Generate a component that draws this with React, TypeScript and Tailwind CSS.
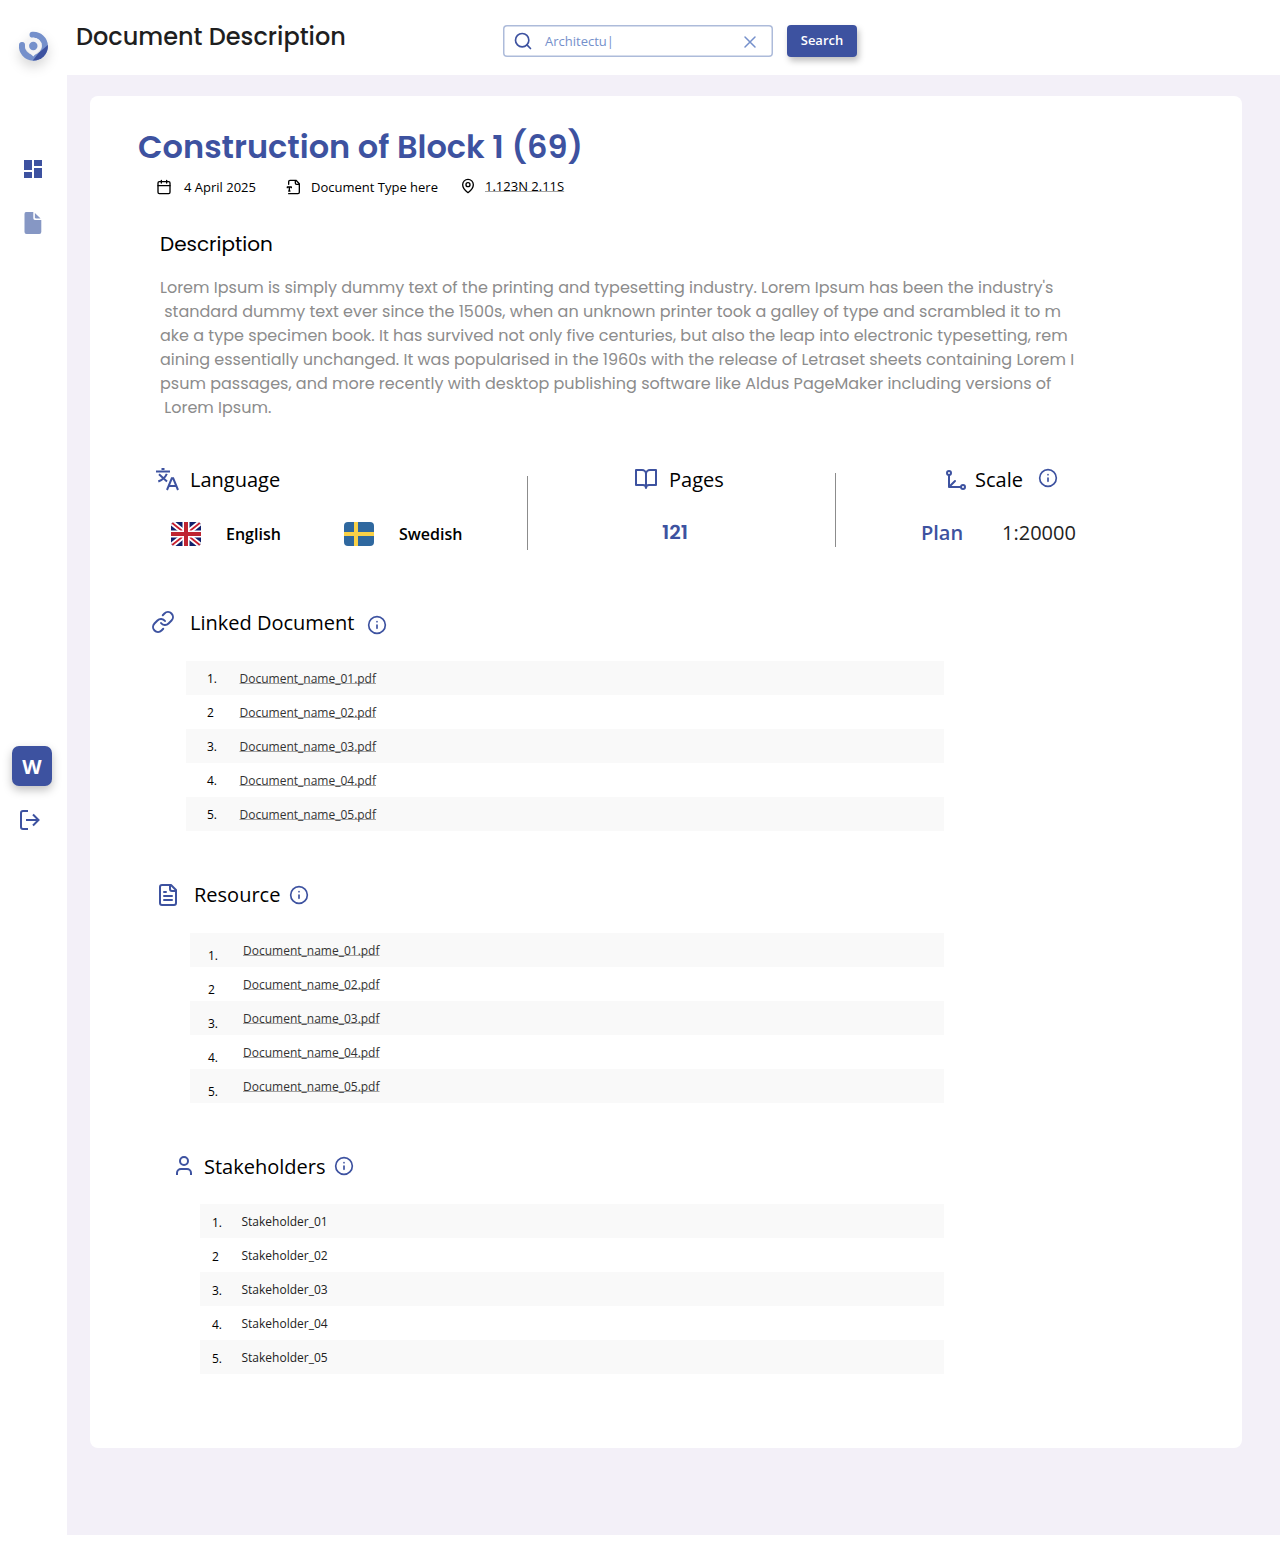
import React from "react";
import { MdDashboard } from "react-icons/md";

type IconProps = { className?: string; children: React.ReactNode; sw?: number };
function Icon({ className = "", children, sw = 2 }: IconProps) {
  return (
    <svg viewBox="0 0 24 24" fill="none" stroke="currentColor" strokeWidth={sw} strokeLinecap="round" strokeLinejoin="round" className={"block shrink-0 " + className}>
      {children}
    </svg>
  );
}

function InfoIcon({ className = "" }: { className?: string }) {
  return (
    <Icon className={"size-5 text-[#3d52a0] " + className}>
      <circle cx="12" cy="12" r="10" />
      <path d="M12 16v-4M12 8h.01" />
    </Icon>
  );
}

const title = "shrink-0 whitespace-pre text-xl leading-7 text-black";
const link = "underline decoration-[#a3a3a3] decoration-1 underline-offset-0 [text-decoration-skip-ink:none]";

function Logo() {
  return (
    <svg viewBox="0 0 30 30" className="ml-[18px] mt-[31px] block size-[30px] overflow-visible drop-shadow-[0_6px_6px_rgba(0,0,0,0.16)]">
      <path d="M4 14A11.5 11.5 0 1 0 14.5 3.7" fill="none" stroke="#7590cb" strokeWidth="6" strokeLinecap="round" />
      <path d="M29.900 14A14.500 14.500 0 0 1 14.800 29.600L20.800 21.700Z" fill="#3d52a0" />
      <path d="M15.300 6.600a8.400 8.400 0 0 1 8.300 8.400c0 4.300-4.600 6.300-8.300 10.400-3.700-4.100-8.300-6.100-8.300-10.400a8.400 8.400 0 0 1 8.300-8.400Z" fill="#f3f3f5" />
      <circle cx="15.300" cy="15" r="4.200" fill="#7590cb" />
    </svg>
  );
}

function Sidebar() {
  return (
    <aside className="flex w-[67px] shrink-0 flex-col">
      <Logo />
      <MdDashboard className="ml-[21px] mt-24 size-6 text-[#3d52a0]" />
      <svg viewBox="0 0 18 22" className="ml-6 mt-[31px] h-[22px] w-[18px]" fill="#8697c4">
        <path d="M2 0H9.300V6.200Q9.300 8 11 8H17.300V20Q17.300 22 15.300 22H2.500Q.5 22 .5 20V2Q.5 0 2 0Z" />
        <path d="M10.900.9 16.600 6.500H12.300Q10.900 6.500 10.900 5.200Z" />
      </svg>
      <div className="ml-3 mt-[512px] flex size-10 items-center justify-center rounded-[7px] bg-[#3d52a0] pt-0.5 text-xl font-bold text-white shadow-[0_4px_10px_rgba(0,0,0,0.25)]">W</div>
      <svg viewBox="0 0 20 20" fill="none" stroke="#3d52a0" strokeWidth="2" className="ml-5 mt-6 size-5">
        <path d="M8 1H3Q1 1 1 3V17Q1 19 3 19H8M6 10H18.500M13 4.500 18.500 10 13 15.500" />
      </svg>
    </aside>
  );
}

function Header() {
  return (
    <header className="flex h-[75px] shrink-0 items-start">
      <h1 className="ml-[9px] mt-[19px] w-[427px] font-['Poppins',Inter,sans-serif] text-2xl leading-9 font-medium text-[#1f1f1f]">Document Description</h1>
      <div className="mt-[25px] flex h-8 w-[270px] items-center rounded text-[13px] text-[#7590cb] shadow-[inset_0_0_0_1.5px_#adbbda]">
        <Icon className="ml-2.5 size-5 text-[#3d52a0]">
          <circle cx="11" cy="11" r="8" />
          <path d="m21 21-4.300-4.300" />
        </Icon>
        <span className="ml-3 mt-0.5 w-[195px]">Architectu|</span>
        <Icon className="mt-0.5 size-5" sw={1.8}>
          <path d="M18 6 6 18M6 6l12 12" />
        </Icon>
      </div>
      <button className="ml-3.5 mt-[25px] h-8 w-[70px] rounded bg-[#3d52a0] pb-0.5 text-[13px] leading-[18px] font-semibold text-white shadow-[2px_4px_6px_rgba(0,0,0,0.25)]">Search</button>
    </header>
  );
}

function Meta() {
  return (
    <div className="ml-[66px] mt-[7px] flex h-9 items-start text-[13px] leading-[18px] text-black">
      <Icon className="mt-px size-4">
        <path d="M8 2v4M16 2v4M3 10h18" />
        <rect x="3" y="4" width="18" height="18" rx="2" />
      </Icon>
      <span className="ml-3 w-[102px]">4 April 2025</span>
      <Icon className="mt-px size-4">
        <path d="M4 22h14a2 2 0 0 0 2-2V7l-5-5H6a2 2 0 0 0-2 2v4M14 2v4a2 2 0 0 0 2 2h4M2 13v-1h6v1M5 12v6M4 18h2" />
      </Icon>
      <span className="ml-[9px] w-[149px]">Document Type here</span>
      <Icon className="size-4">
        <path d="M20 10c0 6-8 12-8 12s-8-6-8-12a8 8 0 0 1 16 0Z" />
        <circle cx="12" cy="10" r="3" />
      </Icon>
      <span className={"-mt-px ml-[9px] " + link}>1.123N 2.11S</span>
    </div>
  );
}

const paragraph = [
  "Lorem Ipsum is simply dummy text of the printing and typesetting industry. Lorem Ipsum has been the industry's",
  " standard dummy text ever since the 1500s, when an unknown printer took a galley of type and scrambled it to m",
  "ake a type specimen book. It has survived not only five centuries, but also the leap into electronic typesetting, rem",
  "aining essentially unchanged. It was popularised in the 1960s with the release of Letraset sheets containing Lorem I",
  "psum passages, and more recently with desktop publishing software like Aldus PageMaker including versions of",
  " Lorem Ipsum.",
];

function UkFlag() {
  return (
    <svg viewBox="0 0 30 24" className="h-6 w-[30px] shrink-0 rounded">
      <rect width="30" height="24" fill="#12206b" />
      <path d="M0 0 30 24M30 0 0 24" stroke="#fff" strokeWidth="5.500" />
      <path d="M0 0 30 24M30 0 0 24" stroke="#c8202f" strokeWidth="1.800" />
      <path d="M15 0V24M0 12H30" stroke="#fff" strokeWidth="7" />
      <path d="M15 0V24M0 12H30" stroke="#bf2430" strokeWidth="4" />
    </svg>
  );
}

function SwedenFlag() {
  return (
    <svg viewBox="0 0 30 24" className="h-6 w-[30px] shrink-0 rounded">
      <rect width="30" height="24" fill="#2f689f" />
      <path d="M12 0V24M0 12H30" stroke="#f9d147" strokeWidth="4" />
    </svg>
  );
}

function Stats() {
  return (
    <div className="mt-11 flex h-[86px] items-start">
      <div className="w-[437px] pl-[65px]">
        <div className="flex h-[58px] items-start">
          <svg viewBox="0 0 24 24" className="mt-[3px] size-6 shrink-0" fill="none" stroke="#3d52a0" strokeWidth="2">
            <path d="M1 4.500H15M6.500 2H9.500M4 7.300 12 14.500M11.800 6.800Q9.500 12 3.300 14.500M12 23 16.800 11.300H18.200L23 23M13.800 19H21.200" />
          </svg>
          <span className={"ml-[11px] mt-0.5 " + title}>Language</span>
        </div>
        <div className="flex items-center pl-4 text-base leading-6 font-semibold text-black">
          <UkFlag />
          <span className="ml-[25px] w-[118px]">English</span>
          <SwedenFlag />
          <span className="ml-[25px]">Swedish</span>
        </div>
      </div>
      <div className="mt-3 h-[74px] w-px bg-[#8c8c8c]" />
      <div className="w-[307px]">
        <div className="flex h-[54px] items-start pl-[106px]">
          <Icon className="mt-[3px] size-6 text-[#3d52a0]">
            <path d="M2 3h6a4 4 0 0 1 4 4v14a3 3 0 0 0-3-3H2zM22 3h-6a4 4 0 0 0-4 4v14a3 3 0 0 1 3-3h7z" />
          </Icon>
          <span className={"ml-[11px] mt-0.5 " + title}>Pages</span>
        </div>
        <div className="pl-[134px] font-['Poppins',Inter,sans-serif] text-xl leading-7 font-semibold text-[#3d52a0]">121</div>
      </div>
      <div className="mt-[9px] h-[74px] w-px bg-[#8c8c8c]" />
      <div>
        <div className="flex h-[54px] items-start pl-[108px]">
          <Icon className="mt-1 size-6 text-[#3d52a0]">
            <circle cx="19" cy="19" r="2" />
            <circle cx="5" cy="5" r="2" />
            <path d="M5 7v12h12M5 19l6-6" />
          </Icon>
          <span className={"ml-[7px] mt-0.5 w-[63px] " + title}>Scale</span>
          <InfoIcon className="mt-1" />
        </div>
        <div className="flex pl-[85px] pt-px text-xl leading-7">
          <span className="w-[81px] font-semibold text-[#3d52a0]">Plan</span>
          <span className="text-[#222]">1:20000</span>
        </div>
      </div>
    </div>
  );
}

type RowsProps = { names: string[]; className: string; num: string; name: string; linked?: boolean };
function Rows({ names, className, num, name, linked }: RowsProps) {
  return (
    <ol className={"text-xs leading-4 " + className}>
      {names.map((n, i) => (
        <li key={n} className="flex h-[34px] items-start odd:bg-[#f9f9f9]">
          <span className={"shrink-0 text-black " + num}>{i === 1 ? "2" : `${i + 1}.`}</span>
          <span className={name + (linked ? " text-[#333] " + link : " text-[#222]")}>{n}</span>
        </li>
      ))}
    </ol>
  );
}

const docs = ["Document_name_01.pdf", "Document_name_02.pdf", "Document_name_03.pdf", "Document_name_04.pdf", "Document_name_05.pdf"];
const holders = ["Stakeholder_01", "Stakeholder_02", "Stakeholder_03", "Stakeholder_04", "Stakeholder_05"];

export default function App() {
  return (
    <div className="flex h-[1554px] w-[1280px] overflow-hidden bg-white font-['Open_Sans','Noto_Sans',sans-serif]">
      <Sidebar />
      <div className="flex w-[1213px] flex-col">
        <Header />
        <main className="h-[1460px] bg-[#f3f0f8] pl-[23px] pt-[21px]">
          <article className="flex h-[1352px] w-[1152px] flex-col rounded-lg bg-white">
            <h2 className="ml-12 mt-[27px] h-12 font-['Poppins',Inter,sans-serif] text-[32px] leading-[48px] font-semibold text-[#3d52a0]">
              Construction of Block 1 (69)
            </h2>
            <Meta />
            <h3 className="ml-[70px] mt-[15px] h-[30px] font-['Poppins',Inter,sans-serif] text-xl leading-[30px] text-black">Description</h3>
            <div className="ml-[70px] mt-[17px] h-36 font-['Poppins',Inter,sans-serif] text-base leading-6 text-[#8c8c8c]">
              {paragraph.map((line) => (
                <p key={line} className="whitespace-pre">{line}</p>
              ))}
            </div>
            <Stats />

            <div className="ml-[61px] mt-[58px] flex h-[53px] items-start">
              <Icon className="mt-0.5 size-6 text-[#3d52a0]">
                <path d="M10 13a5 5 0 0 0 7.540.54l3-3a5 5 0 0 0-7.070-7.070l-1.720 1.710M14 11a5 5 0 0 0-7.540-.54l-3 3a5 5 0 0 0 7.070 7.070l1.710-1.710" />
              </Icon>
              <span className={"ml-[15px] mt-px w-[177px] " + title}>Linked Document</span>
              <InfoIcon className="mt-[7px]" />
            </div>
            <Rows names={docs} className="ml-24 w-[758px]" num="ml-[21px] mt-[10px] w-[32.5px]" name="mt-[10px]" linked />

            <div className="ml-[66px] mt-[49px] flex h-[53px] items-start">
              <Icon className="mt-[3px] size-6 text-[#3d52a0]">
                <path d="M15 2H6a2 2 0 0 0-2 2v16a2 2 0 0 0 2 2h12a2 2 0 0 0 2-2V7ZM14 2v4a2 2 0 0 0 2 2h4M10 9H8M16 13H8M16 17H8" />
              </Icon>
              <span className={"ml-3.5 mt-px w-[95px] " + title}>Resource</span>
              <InfoIcon className="mt-[5px]" />
            </div>
            <Rows names={docs} className="ml-[100px] w-[754px]" num="ml-[18px] mt-[15px] w-[35px]" name="mt-[10px]" linked />

            <div className="ml-[82px] mt-[49px] flex h-[52px] items-start">
              <Icon className="mt-0.5 size-6 text-[#3d52a0]">
                <path d="M19 21v-2a4 4 0 0 0-4-4H9a4 4 0 0 0-4 4v2" strokeLinecap="butt" />
                <circle cx="12" cy="7" r="4" />
              </Icon>
              <span className={"ml-2 mt-px w-[130px] " + title}>Stakeholders</span>
              <InfoIcon className="mt-1" />
            </div>
            <Rows names={holders} className="ml-[110px] w-[744px]" num="ml-3 mt-[11px] w-[29.5px]" name="mt-[10px]" />
          </article>
        </main>
      </div>
    </div>
  );
}
